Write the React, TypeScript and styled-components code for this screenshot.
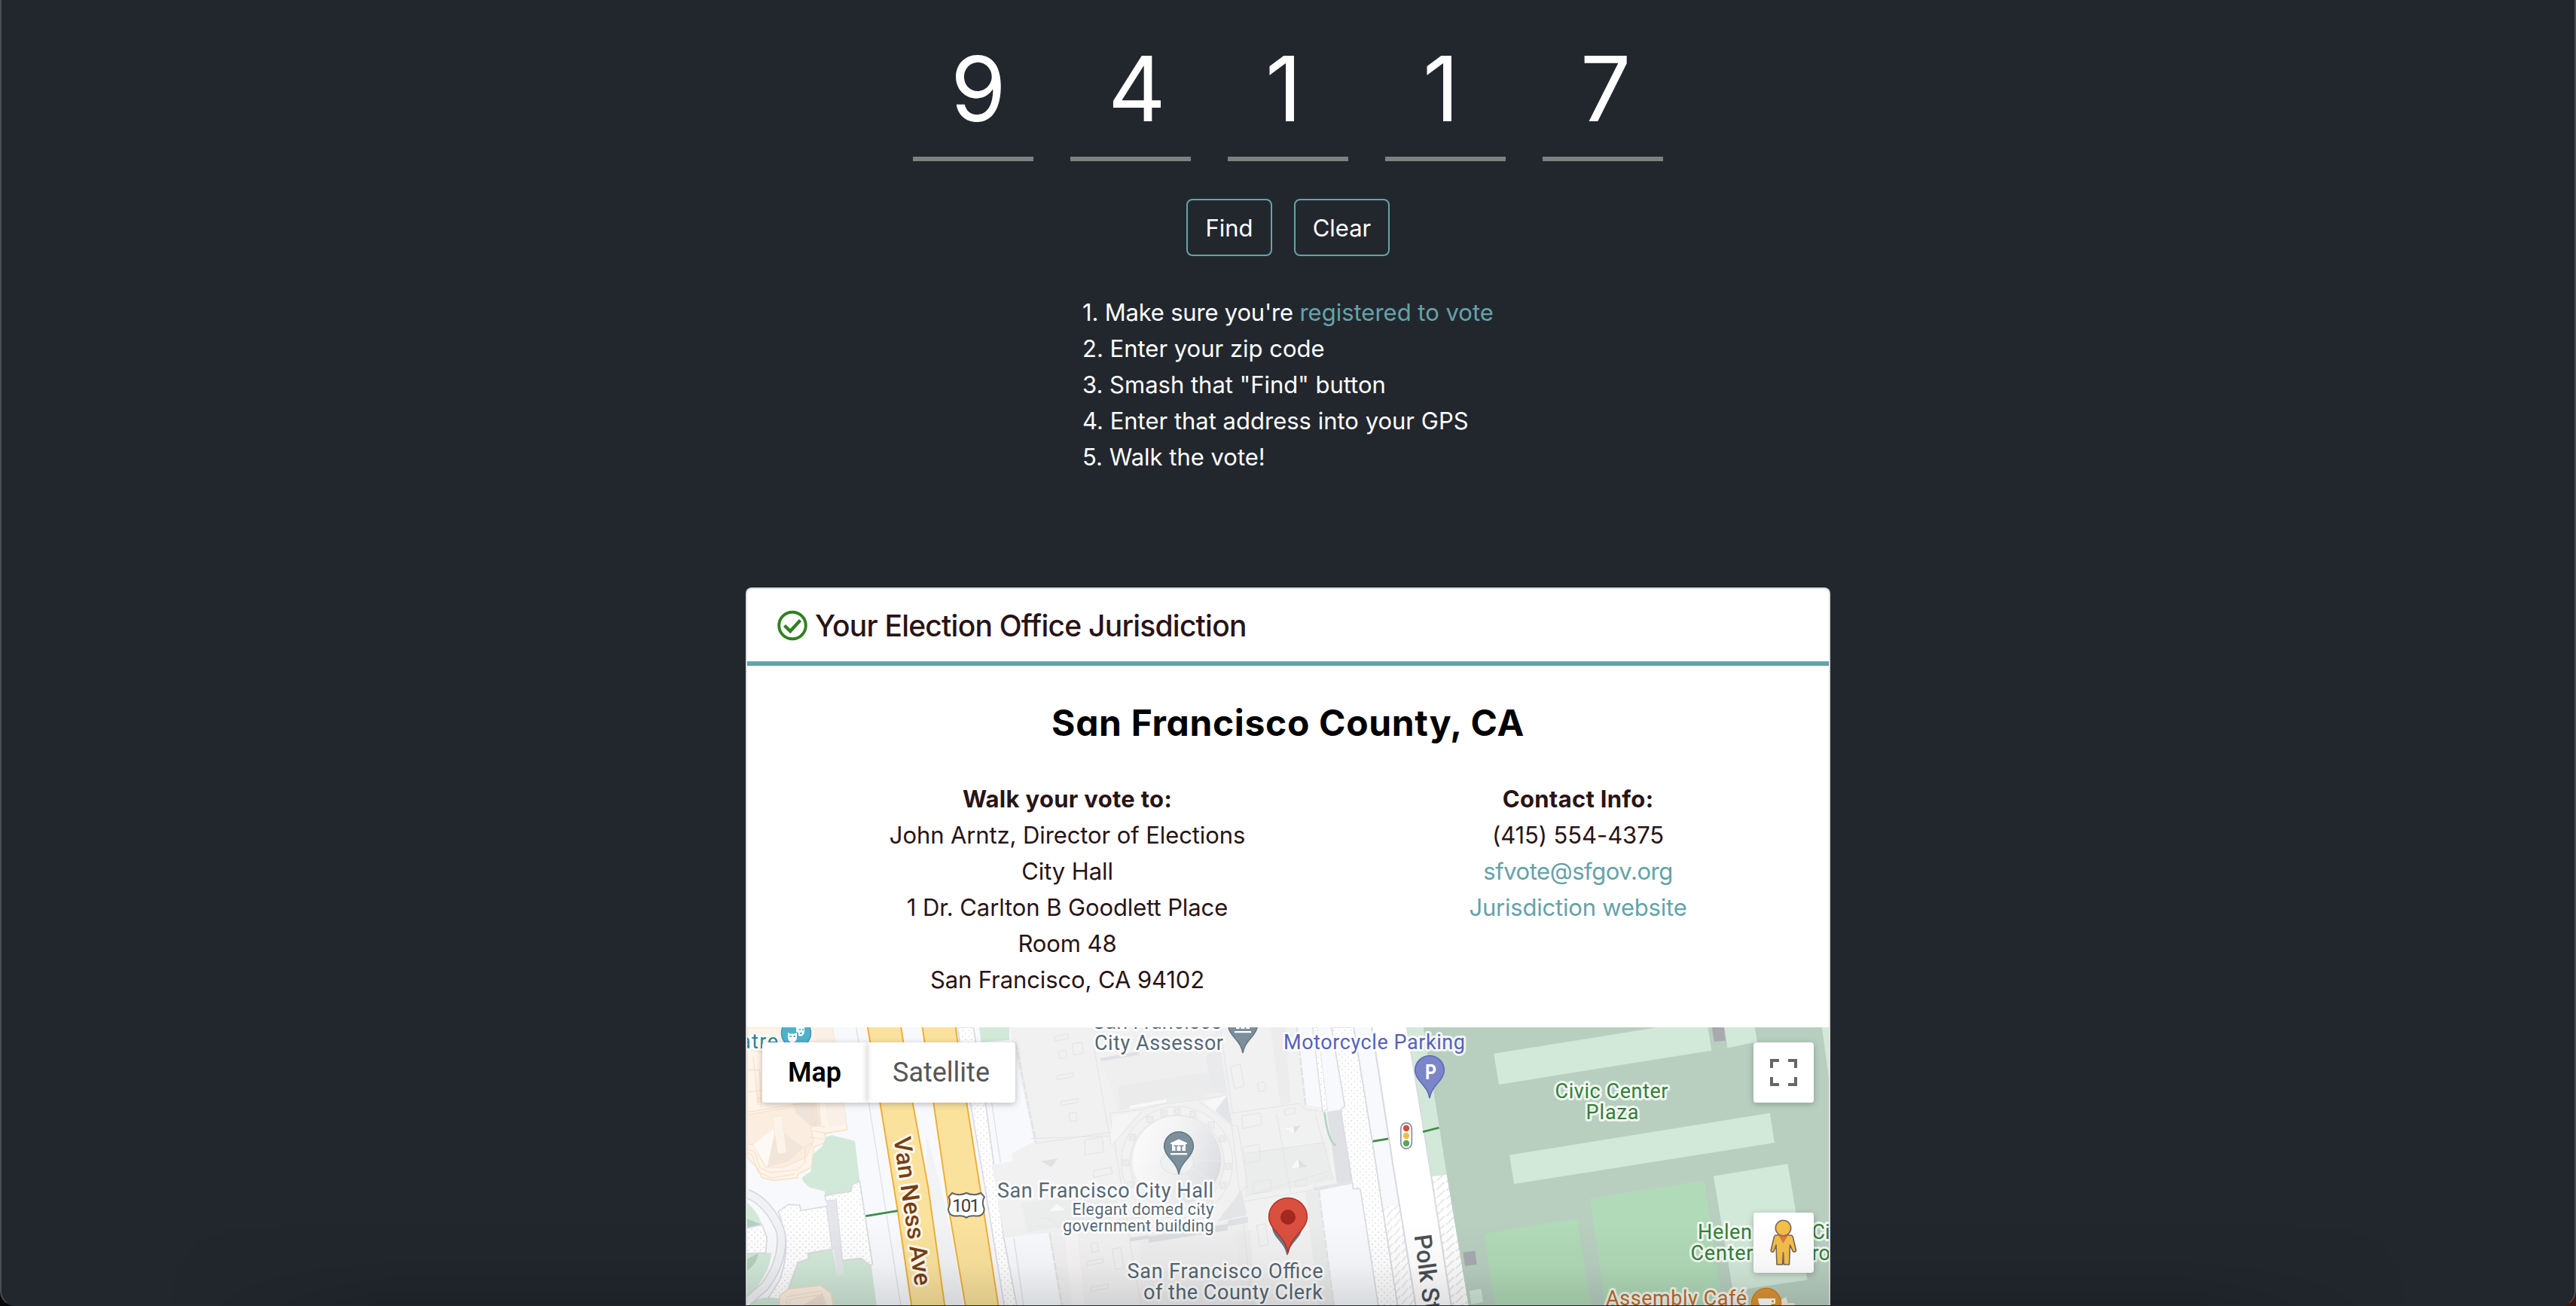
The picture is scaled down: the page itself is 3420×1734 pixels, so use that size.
import React from "react";
import styled, { createGlobalStyle } from "styled-components";

const Global = createGlobalStyle`
  html, body { margin: 0; background: #0b0c0e; }
  * { box-sizing: border-box; }
`;

const ui = `Inter, "Liberation Sans", sans-serif`;
const teal = "#65a3a8";
const ink = "#291416";

/* ---------- window ---------- */
const Desktop = styled.div`
  width: 3420px;
  height: 1734px;
  overflow: hidden;
  background: linear-gradient(90deg, #06070a 50%, #40170f 50%);
`;
const Page = styled.main`
  position: relative;
  width: 3420px;
  height: 1734px;
  overflow: hidden;
  display: flex;
  flex-direction: column;
  align-items: center;
  background: #22272e;
  border: 2px solid #4a4d51;
  border-top: 0;
  border-bottom: 1px solid #26292c;
  border-radius: 0 0 20px 20px;
  font-family: ${ui};
  font-size: 31px;
  font-weight: 430;
  line-height: 48px;
  color: #fff;
`;
const DockShade = styled.div`
  position: absolute;
  left: 220px;
  right: 220px;
  bottom: 0;
  height: 110px;
  pointer-events: none;
  background: linear-gradient(rgba(0, 0, 0, 0), rgba(0, 0, 0, 0.03) 50%, rgba(0, 0, 0, 0.12));
  mask-image: linear-gradient(90deg, transparent, #000 300px, #000 calc(100% - 300px), transparent);
`;

/* ---------- zip form ---------- */
const ZipRow = styled.div`
  display: flex;
  gap: 49px;
`;
const Digit = styled.div`
  width: 160px;
  height: 214px;
  padding: 48px 0 0 50px;
  border-bottom: 6px solid #808080;
  font-size: 119px;
  font-weight: 400;
  line-height: 141px;
`;
const Actions = styled.div`
  display: flex;
  gap: 29px;
  margin-top: 50px;
`;
const Button = styled.button<{ $w: number }>`
  width: ${(p) => p.$w}px;
  height: 76px;
  padding: 0;
  border: 2px solid ${teal};
  border-radius: 8px;
  background: transparent;
  color: #fff;
  font: 430 31px ${ui};
`;
const Steps = styled.div`
  width: 546px;
  margin-top: 51px;
  white-space: nowrap;
`;
const Link = styled.a<{ $ls?: number }>`
  color: ${teal};
  letter-spacing: ${(p) => p.$ls ?? 0}px;
`;
const FirstStep = styled.div`
  letter-spacing: -0.2px;
`;

/* ---------- card ---------- */
const Card = styled.section`
  width: 1440px;
  flex: none;
  margin-top: 149px;
  border: 2px solid #dedede;
  border-bottom: 0;
  border-radius: 8px 8px 0 0;
  background: #fff;
  color: ${ink};
`;
const CardHeader = styled.header`
  height: 102px;
  padding: 2px 40px 0;
  display: flex;
  align-items: center;
  gap: 9px;
  border-bottom: 6px solid ${teal};
  font-size: 39px;
  font-weight: 520;
  letter-spacing: -0.77px;
  svg { margin-top: -2px; }
`;
const County = styled.h1`
  margin: 47px 0 0;
  font-size: 48px;
  line-height: 58px;
  font-weight: 690;
  letter-spacing: 0.65px;
  text-align: center;
  color: #000;
  font-feature-settings: "cv11";
`;
const Info = styled.div`
  display: grid;
  grid-template-columns: 770px 586px;
  padding: 0 40px;
  margin-top: 48px;
  height: 327px;
  text-align: center;
  letter-spacing: -0.1px;
`;
const Column = styled.div`
  display: flex;
  flex-direction: column;
  align-items: center;
`;
const Strong = styled.b`
  font-weight: 700;
  letter-spacing: 0.3px;
`;

/* ---------- map ---------- */
const MapBox = styled.div`
  position: relative;
  height: 370px;
  overflow: hidden;
  background: #f7f9fc;
  font-family: Roboto, sans-serif;
  font-weight: 400;
  > svg { display: block; }
`;
const Controls = styled.div`
  position: absolute;
  inset: 20px;
  bottom: auto;
  height: 306px;
  display: flex;
  justify-content: space-between;
`;
const TypeSwitch = styled.div`
  display: flex;
  height: 80px;
  border-radius: 4px;
  overflow: hidden;
  background: #fff;
  box-shadow: 0 2px 8px rgba(0, 0, 0, 0.25);
`;
const TypeOption = styled.div<{ $active?: boolean; $w: number }>`
  width: ${(p) => p.$w}px;
  display: flex;
  align-items: center;
  justify-content: center;
  font-size: 36px;
  font-weight: ${(p) => (p.$active ? 600 : 400)};
  color: ${(p) => (p.$active ? "#000" : "#565656")};
  box-shadow: 0 0 8px rgba(0, 0, 0, 0.2);
`;
const Side = styled.div`
  display: flex;
  flex-direction: column;
  justify-content: space-between;
`;
const Square = styled.div`
  width: 80px;
  height: 80px;
  display: flex;
  align-items: center;
  justify-content: center;
  border-radius: 4px;
  background: #fff;
  box-shadow: 0 2px 8px rgba(0, 0, 0, 0.25);
`;
const Label = styled.text`
  paint-order: stroke;
  stroke: rgba(255, 255, 255, 0.82);
  stroke-width: 6px;
  stroke-linejoin: round;
`;

const CheckCircle = () => (
  <svg width="41" height="41" viewBox="0 0 41 41" fill="none" stroke="#2f8120">
    <circle cx="20" cy="20.5" r="17.8" strokeWidth="3.9" />
    <path d="M9.500 20.500l7.700 7.500L30.500 13.500" strokeWidth="4.400" />
  </svg>
);

const Expand = () => (
  <svg width="36" height="36" fill="none" stroke="#666" strokeWidth="4">
    <path d="M2 12V2h10M24 2h10v10M34 24v10H24M12 34H2V24" />
  </svg>
);

const Pegman = () => (
  <svg width="36" height="62" viewBox="0 0 36 62" stroke="#74695a" strokeWidth="1.6" strokeLinejoin="round">
    <path
      d="M8 21h19c2 0 3 1 3.500 3l4 17c.3 2-3 3-4.200 1.300L26.500 34 25.500 60h-7.200L17.500 44l-1 16H9L8 34l-3 8.300C4 44 .8 43 1.200 41l4-17c.4-2 1.300-3 2.800-3z"
      fill="#f4be4b"
    />
    <path d="M11.500 21.500h12L17.500 32z" fill="#d5803f" stroke="none" />
    <circle cx="17.500" cy="11.500" r="10.200" fill="#f4be4b" />
    <path d="M10.500 20.500q7 3 14 0" fill="none" stroke="#d0633a" />
  </svg>
);

type LabelProps = { x: number; y: number; w?: number; size?: number; fill: string; children: string };
const Place = ({ x, y, w, size = 27, fill, children }: LabelProps) => (
  <Label x={x} y={y} fontSize={size} fill={fill} textLength={w}>
    {children}
  </Label>
);

const Pin = ({ x, y, fill, stroke }: { x: number; y: number; fill: string; stroke: string }) => (
  <path
    transform={`translate(${x} ${y})`}
    d="M0 37C-1.500 29-4 25-10 18C-15.500 12-19.300 7-19.300 0A19.300 19.300 0 0 1 19.300 0C19.300 7 15.500 12 10 18C4 25 1.500 29 0 37z"
    fill={fill}
    stroke={stroke}
    strokeWidth="1.600"
  />
);

const Museum = ({ x, y }: { x: number; y: number }) => (
  <g transform={`translate(${x} ${y})`} fill="#fff">
    <path d="M-11-4.500L0-9.500 11-4.500v1.500h-22zM-9-3h18v9H4.500V0h2v-1.500h-6V0h2v6h-5V0h2v-1.500h-6V0h2v6H-9zM-11 9h22v2.200h-22z" />
  </g>
);

const West = () => (
  <g transform="translate(980 1350) scale(.33333)">
    {/* theatre */}
    <path d="M36 42H375L435 450 345 465 348 500 300 520 292 600 240 625 235 642 140 652 95 640 75 600 36 560z" fill="#fdf4ea" stroke="#fadfc4" strokeWidth="4" />
    <path d="M300 42H375L432 430 360 440z" fill="#faf0e8" />
    <path d="M36 390L320 340 330 430 290 440 300 500 270 560 180 600 110 600 60 510 36 505z" fill="#fbeee0" stroke="#f9dfc6" strokeWidth="3" />
    <path d="M215 345L310 342 328 430 290 436 232 385z" fill="#efe4da" />
    <path d="M150 440L260 520 205 575 115 600z" fill="#f2e6da" />
    <path d="M150 440L60 510 115 600z" fill="#fdfaf6" />
    <path d="M135 400l40-8 18 150-35 4z" fill="#fcf4ea" stroke="#f9dfc6" strokeWidth="2" />
    <path d="M36 130l60 10 15 200M36 212h50l6 150M36 380l250-40 22 90M60 160l20 190M36 300l60-8M300 430l45 10M298 455l60 10M290 480l50 8M36 525l30 15 20 60 40 20 110-10 30-30 0-60 30-20M36 540l20 12 24 68 55 22 90-15" fill="none" stroke="#fadcbf" strokeWidth="3" />
    <circle cx="83" cy="330" r="8" fill="none" stroke="#fadcbf" strokeWidth="3" />

    {/* lawns */}
    <path d="M375 472L465 495 484 655 455 668 450 695 345 712V695L285 680 258 655 255 640 290 615 300 545 335 515 350 478z" fill="#d2e9d9" />
    <path d="M36 740Q80 780 95 828L36 840z" fill="#d2e9d9" />
    <path d="M36 805L95 828 36 840z" fill="#b6d0bf" />
    <path d="M36 945L132 940Q130 1000 80 1070L36 1115z" fill="#d2e9d9" />
    <path d="M36 965L80 942Q75 985 36 1010z" fill="#b6d0bf" />
    <path d="M195 1095L240 975 280 962 279 942 375 925 395 1030 420 1025 412 970 490 960 530 990 552 1152H370V1100L330 1070z" fill="#d2e9d9" />
    <path d="M960 42H1080V92L968 102z" fill="#d2e9d9" />
    <path d="M36 1152Q90 1110 120 1120L195 1095 165 1152z" fill="#d2e9d9" />

    {/* ring road */}
    <path d="M36 705Q120 735 170 855Q185 970 105 1075L36 1135" fill="none" stroke="#d5d7dc" strokeWidth="38" />
    <path d="M36 705Q120 735 170 855Q185 970 105 1075L36 1135" fill="none" stroke="#f1f2f4" strokeWidth="29" />

    {/* paved plazas */}
    <g fill="url(#dots)" stroke="#dadbe0" strokeWidth="5">
      <path d="M36 842L95 828 115 880 110 940 36 943" />
      <path d="M160 775L200 748 245 750 250 772 352 755 375 925 278 942 280 965 238 978 190 1110 165 1125 120 1120 165 1050Q200 950 187 860z" />
      <path d="M345 712L450 695 455 668 484 655 535 985 525 990 490 962 415 970 390 730 350 733z" />
    </g>
    <path d="M350 733L388 727 420 1025 395 1032z" fill="#e5e6eb" />
    <path d="M165 1152V1110L200 1085 330 1070 372 1105 378 1152z" fill="#fdf1e4" stroke="#fadcbf" strokeWidth="4" />
    <path d="M190 1152L195 1115 330 1092 355 1152M200 1152l5-25 120-20" fill="none" stroke="#fadcbf" strokeWidth="3" />
    <path d="M255 1152L335 1100 350 1152z" fill="#f1e2d3" />

    {/* Van Ness Avenue */}
    <path d="M470 42L520 342 580 720 648 1152" fill="none" stroke="#dfe1e4" strokeWidth="4" />
    <path d="M750 470Q745 700 825 1152H895Q850 800 750 470z" fill="#f1f3f5" />
    <g fill="#fae29d" stroke="#efaf3d" strokeWidth="6">
      <path d="M515 36L565 342 635 770 692 1160H824L757 680 695 342 648 36z" />
      <path d="M733 36L778 342 845 800 907 1160H1038L965 690 910 342 865 36z" />
    </g>
    <path d="M873 42H937L985 342 1058 880 1110 1152H1060L985 690 925 342z" fill="url(#dots)" stroke="#dadbe0" strokeWidth="5" />
    <path d="M1010 342L1045 580M1098 880L1137 1152" fill="none" stroke="#dfe1e4" strokeWidth="4" />
    <path d="M508 794L635 773" stroke="#3f8c4a" strokeWidth="8" />
    <path d="M852 702Q880 715 909 702Q940 715 967 702L981 718Q968 735 980 765Q980 798 940 793Q920 792 909 800Q898 792 878 793Q838 798 837 765Q850 735 838 718z" fill="#fff" stroke="#5f6368" strokeWidth="6" strokeLinejoin="round" />
  </g>
);

const ringAngles = [-150, -122, -105, -90, -72, -48, -28, 4, 26, 50, 155, 180];

const CityHall = () => (
  <g transform="translate(1400 1350) scale(.33333)">
    <path d="M-180 42H960L1000 352 1065 360 1070 385 1140 370 1185 655 1035 690 1052 700 1115 1152H25L-20 860-200 880-250 590-165 575-170 545-100 505-80 500z" fill="#f1f1f1" />
    <path d="M-155 100L-75 500M-20 860L30 1152M965 42L1000 352M1052 690L1112 1152" stroke="#e4e4e6" strokeWidth="8" strokeDasharray="34 6" fill="none" />
    {/* inner courts */}
    <path d="M185 165L600 100 640 42 690 310 255 375z" fill="#efefef" />
    <path d="M183 165L335 137 335 152 185 176z" fill="#dfe0e3" />
    <path d="M255 275L610 220 635 300 260 372z" fill="#ebebeb" />
    <path d="M605 170L650 42 688 308 625 300z" fill="#e9eaec" />
    <path d="M298 355L447 328 447 340 300 366z" fill="#f8f8f8" />
    <path d="M447 325L605 305 605 320 447 342z" fill="#ebecec" />
    <path d="M340 870L735 805 770 820 790 1152H345z" fill="#eeeeee" />
    <path d="M375 875L690 825V850L375 900z" fill="#dcdde1" />
    <path d="M300 880L375 870V884L300 895z" fill="#dcdde1" />
    <path d="M690 810L770 795V820L690 835z" fill="#dfe0e4" />
    {/* wings */}
    <path d="M755 545L1080 500 1110 650 760 715z" fill="#ebedec" />
    <path d="M-130 740L225 700 290 790-110 860z" fill="#ebedec" />
    <path d="M860 42H920L940 345 900 350z" fill="#ececec" />
    <path d="M1000 700L1048 695 1110 1152H1050z" fill="#eaecec" />
    <path d="M720 860L780 850 800 1152H750z" fill="#ececec" />
    <path d="M1085 378L1140 370 1185 655 1125 665z" fill="#e0e1e5" />
    <path d="M1075 380Q1090 500 1120 512" fill="none" stroke="#b3d4bf" strokeWidth="8" />
    <path d="M1030 680L1180 655 1185 665 1035 695z" fill="#e3e4e7" />
    <path d="M40 870L90 860 120 1152H70z" fill="#f6f4f4" />
    <g fill="none" stroke="#e3e3e5" strokeWidth="3">
      <path d="M220 385L345 370 420 350 575 330 690 312M225 515L350 375M575 335L700 430 730 435 770 680 755 680 650 815M700 385L975 345 1000 370 1050 375M-80 505L220 460M-95 485L215 475M755 735L1030 690Q1040 650 1095 630M760 715L1090 615M-60 800Q0 800 15 840L370 795" />
      <path d="M220 385L300 880M700 385L790 1152M155 110L225 510M885 385L940 700M660 42L710 390M300 895L345 1152M1040 390L1110 650M755 545L1080 500" />
      <path d="M0 80l55-12v18l-55 12zM15 140l30-8 5 30-30 6zM70 108l40-8 5 45-38 8zM10 235l65-12v16l-65 12zM25 338l68-13v16l-68 12zM58 385l28-6 4 34-28 5zM700 200l40-12 15 88-38 10zM808 265l30-6 4 34-28 5zM120 490l70-10 6 58-75 12zM155 612l70-12 6 24-75 16zM805 830l35-6 12 82-34 8zM145 905l26-6 4 34-26 5zM130 975l65-12v16l-65 12zM145 1078l68-13v16l-68 12zM230 925l34-6 12 82-34 6zM745 395l75-12 6 45-75 18zM790 660l70-12 5 45-70 14zM915 370l40-10 5 22-40 12zM960 655l45-8v25l-45 6zM750 520l65-12 6 65-60 12z" />
    </g>
    <path d="M225 515L230 400 340 375z" fill="#f5f5f5" />
    <path d="M590 340L688 312 640 375z" fill="#f7f7f7" />
    <path d="M688 312L705 430 640 375z" fill="#e3e4e7" />
    <path d="M650 815L745 690 765 790z" fill="#e3e5e6" />
    <path d="M912 443L980 433 955 467z" fill="#e0e0e2" />
    <path d="M912 443L952 438 955 467z" fill="#f8f8f8" />
    <path d="M940 605L970 565 1005 598z" fill="#dddfe0" />
    <path d="M940 605L970 565 975 600z" fill="#f8f8f8" />
    <path d="M-52 575L-12 600 12 565z" fill="#e0e2e2" />
    <path d="M-20 775L10 745 42 770z" fill="#f8f8f8" />
    {/* dome */}
    <circle cx="488" cy="580" r="222" fill="#f2f2f2" stroke="#e3e3e5" strokeWidth="3" />
    <circle cx="488" cy="580" r="188" fill="#efeff0" stroke="#e3e3e5" strokeWidth="3" />
    <circle cx="488" cy="572" r="176" fill="url(#dome)" />
    {[0, 1, 2, 3, 4, 5, 6, 7, 8, 9, 10, 11].map((i) => (
      <path key={i} d="M488 572V396" stroke="#fff" strokeOpacity=".35" strokeWidth="2" transform={`rotate(${i * 30} 488 572)`} />
    ))}
    {ringAngles.map((a) => {
      const r = (a * Math.PI) / 180;
      const x = 488 + 204 * Math.cos(r);
      const y = 582 + 204 * Math.sin(r);
      return (
        <g key={a} fill="none" stroke="#e0e1e3" strokeWidth="3">
          <rect x={x - 12} y={y - 12} width="24" height="24" />
          <circle cx={x} cy={y} r="7" />
        </g>
      );
    })}
    <ellipse cx="488" cy="580" rx="66" ry="48" fill="#eff0f0" stroke="#e0e1e3" strokeWidth="3" />

    {/* Polk Street kerbs and pavement */}
    <path d="M1028 42H1048L1088 368 1068 378z" fill="url(#dots)" stroke="#dadbe0" strokeWidth="4" />
    <path d="M1048 42L1088 368 1140 370 1156 356 1103 42z" fill="#f7f9fc" />
    <path d="M1103 42L1156 356 1140 370 1190 685 1218 685 1290 1152H1367L1265 490 1192 42z" fill="url(#dots)" stroke="#dadbe0" strokeWidth="5" />
    <path d="M1192 42L1265 490 1367 1152H1440L1262 42z" fill="#f7f9fc" />
    <path d="M1308 760L1372 750 1438 1152H1367z" fill="url(#hatch)" />
    <path d="M1192 42L1265 490 1367 1152" fill="none" stroke="#dadbe0" strokeWidth="5" />
    <path d="M1268 496L1335 485" stroke="#3f8c4a" strokeWidth="8" />
  </g>
);

const Plaza = () => (
  <g transform="translate(1780 1350) scale(.42088 .33333)">
    <path d="M97 42H208L350 1152H237L165 590z" fill="#fff" />
    <path d="M260 42H1545V1152H403L334 630z" fill="#b8cfc0" />
    <path d="M208 42H260L334 630 286 637z" fill="#d2e9d9" />
    <path d="M286 637L334 630 403 1152H350z" fill="url(#hatch)" />
    <path d="M98 42L166 600 237 1152M209 42L286 637 349 1152" fill="none" stroke="#dadbe0" strokeWidth="5" />
    <g fill="#d2e9d9">
      <path d="M483 147L1000 42H1158L1170 134 499 270z" />
      <path d="M532 551L1354 383 1368 502 547 666z" />
      <path d="M1210 42H1306L1314 100 1220 124z" />
      <path d="M1176 635L1410 586 1472 1048 1237 1092z" />
      <path d="M1518 42H1545V290z" />
      <path d="M406 1093L443 1083 449 1136 412 1146z" />
    </g>
    <g fill="#b1dab8">
      <path d="M786 724L1147 651 1205 1152H835z" />
      <path d="M452 863L745 804 790 1152H487z" />
    </g>
    <g fill="#a8aab0">
      <path d="M1171 42H1209L1214 95 1178 99z" />
      <path d="M386 938L424 932 429 987 392 992z" />
    </g>
    <path d="M1385 1130L1405 1115 1410 1140 1430 1140 1432 1152H1380z" fill="#f6ecd9" />
    <path d="M259 458L310 442" stroke="#3f8c4a" strokeWidth="8" />
  </g>
);

const slate = "#566874";

const CityMap = () => (
  <svg width="1436" height="370" viewBox="992 1364 1436 370">
    <defs>
      <pattern id="dots" width="24" height="24" patternUnits="userSpaceOnUse">
        <rect width="24" height="24" fill="#fff" />
        <circle cx="6" cy="6" r="3" fill="#e2e3e8" />
        <circle cx="18" cy="18" r="3" fill="#e2e3e8" />
      </pattern>
      <pattern id="hatch" width="30" height="34" patternUnits="userSpaceOnUse" patternTransform="skewY(8)">
        <rect width="30" height="34" fill="#fff" />
        <path d="M3 34L27 0" stroke="#e2e3e7" strokeWidth="4" />
      </pattern>
      <linearGradient id="dome" x1="0" y1=".3" x2="1" y2=".7">
        <stop offset="0" stopColor="#fbfbfc" />
        <stop offset=".5" stopColor="#f0f0f1" />
        <stop offset="1" stopColor="#dbdce1" />
      </linearGradient>
    </defs>
    <West />
    <CityHall />
    <Plaza />

    {/* place pins */}
    <circle cx="1057" cy="1371.500" r="19.500" fill="#4fb2cb" stroke="#3f93b5" strokeWidth="1.500" />
    <path d="M1046 1371l3 1.500h6l3-1.500v7q-1 6-6 6t-6-6zM1057 1364h11v6q-1 5-5 6l-3-1v-4l-3-1z" fill="#fff" />
    <path d="M1048.500 1376h2.500M1053.500 1376h2.500M1061 1367h2M1065 1367h2M1062 1372h3" stroke="#4fb2cb" strokeWidth="1.800" />
    <Pin x={1650} y={1361} fill="#7c8f9b" stroke="#637986" />
    <Museum x={1650} y={1360} />
    <Pin x={1565} y={1522} fill="#7c8f9b" stroke="#637986" />
    <Museum x={1565} y={1522} />
    <Pin x={1898} y={1421} fill="#7a86c7" stroke="#5c69bb" />
    <text x="1892" y="1433" fontSize="28" fontWeight="700" fill="#fff" textLength="15" lengthAdjust="spacingAndGlyphs">P</text>
    <Pin x={1709} y={1629} fill="#637986" stroke="#637986" />
    <path
      d="M1710 1663.500C1708 1653 1705 1648 1698 1640C1690 1631 1684.600 1624 1684.600 1615.800A25.400 25.400 0 0 1 1735.400 1615.800C1735.400 1624 1730 1631 1722 1640C1715 1648 1712 1653 1710 1663.500z"
      fill="#d9503f"
      stroke="#b53127"
      strokeWidth="1.500"
    />
    <circle cx="1710" cy="1616" r="10" fill="#a3281f" />
    <rect x="1859.800" y="1491" width="14.500" height="34" rx="7.200" fill="#fff" stroke="#8c959c" strokeWidth="1.800" />
    <circle cx="1867" cy="1498" r="4.200" fill="#db4b3c" />
    <circle cx="1867" cy="1508" r="4.200" fill="#f2bd42" />
    <circle cx="1867" cy="1518" r="4.200" fill="#58a65c" />
    <circle cx="2345" cy="1730" r="19.500" fill="#dd9534" stroke="#cf8128" strokeWidth="1.500" />
    <path d="M2334 1724h23v7h-5q-1 5-4 6h-8q-5-3-6-13zM2352 1726.500v2.500h3v-2.500z" fill="#fff" fillRule="evenodd" />

    {/* labels */}
    <Place x={1451} y={1365.5} w={172} fill={slate}>San Francisco</Place>
    <Place x={1453} y={1393.5} w={171} fill={slate}>City Assessor</Place>
    <Place x={1324} y={1589.5} w={287} fill={slate}>San Francisco City Hall</Place>
    <Place x={1423.5} y={1613} w={188} size={22} fill={slate}>Elegant domed city</Place>
    <Place x={1411} y={1635} w={200.5} size={22} fill={slate}>government building</Place>
    <Place x={1496.5} y={1697} w={260} fill={slate}>San Francisco Office</Place>
    <Place x={1518} y={1724.5} w={238} fill={slate}>of the County Clerk</Place>
    <Place x={1704} y={1392.5} w={241} fill="#5662bb">Motorcycle Parking</Place>
    <Place x={982} y={1391.5} w={51} fill="#2f8490">atre</Place>
    <Place x={2064.5} y={1458} w={150} fill="#347f39">Civic Center</Place>
    <Place x={2105.5} y={1486} w={70} fill="#347f39">Plaza</Place>
    <Place x={2254} y={1645} w={72} fill="#347f39">Helen</Place>
    <Place x={2244.5} y={1672.5} w={83} fill="#347f39">Center</Place>
    <Place x={2405.5} y={1645} fill="#347f39">Ci</Place>
    <Place x={2405.5} y={1672.5} fill="#347f39">ro</Place>
    <Place x={2132} y={1733} w={187} fill="#c26d25">Assembly Café</Place>
    <Label transform="translate(1186.500 1511) rotate(81.800)" fontSize="32" fontWeight="500" fill="#773f14" textLength="199">
      Van Ness Ave
    </Label>
    <Label transform="translate(1877.500 1640.500) rotate(82.500)" fontSize="32" fontWeight="500" fill="#4b5157">
      Polk St
    </Label>
    <text x="1264" y="1608.500" fontSize="24" fontWeight="400" fill="#3c4043" textLength="37">101</text>
  </svg>
);

export default function App() {
  return (
    <Desktop>
      <Global />
      <Page>
        <ZipRow>
          {["9", "4", "1", "1", "7"].map((d, i) => (
            <Digit key={i}>{d}</Digit>
          ))}
        </ZipRow>
        <Actions>
          <Button $w={114}>Find</Button>
          <Button $w={127}>Clear</Button>
        </Actions>
        <Steps>
          <FirstStep>
            1. Make sure you're <Link>registered to vote</Link>
          </FirstStep>
          <div>2. Enter your zip code</div>
          <div>3. Smash that "Find" button</div>
          <div>4. Enter that address into your GPS</div>
          <div>5. Walk the vote!</div>
        </Steps>
        <Card>
          <CardHeader>
            <CheckCircle />
            Your Election Office Jurisdiction
          </CardHeader>
          <County>San Francisco County, CA</County>
          <Info>
            <Column>
              <Strong>Walk your vote to:</Strong>
              <span>John Arntz, Director of Elections</span>
              <span>City Hall</span>
              <span>1 Dr. Carlton B Goodlett Place</span>
              <span>Room 48</span>
              <span>San Francisco, CA 94102</span>
            </Column>
            <Column>
              <Strong>Contact Info:</Strong>
              <span>(415) 554-4375</span>
              <Link $ls={-0.45}>sfvote@sfgov.org</Link>
              <Link $ls={-0.2}>Jurisdiction website</Link>
            </Column>
          </Info>
          <MapBox>
            <CityMap />
            <Controls>
              <TypeSwitch>
                <TypeOption $active $w={139}>Map</TypeOption>
                <TypeOption $w={197}>Satellite</TypeOption>
              </TypeSwitch>
              <Side>
                <Square><Expand /></Square>
                <Square><Pegman /></Square>
              </Side>
            </Controls>
          </MapBox>
        </Card>
        <DockShade />
      </Page>
    </Desktop>
  );
}
